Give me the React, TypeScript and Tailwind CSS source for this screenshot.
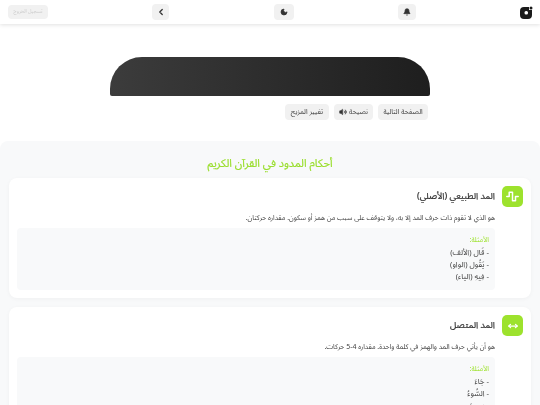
import { Bell, ChevronLeft, Moon, Volume2, MoveHorizontal } from "lucide-react";

const rules = [
  {
    title: "المد الطبيعي (الأصلي)",
    text: "هو الذي لا تقوم ذات حرف المد إلا به، ولا يتوقف على سبب من همز أو سكون. مقداره حركتان.",
    examples: ["- قَال (الألف)", "- يَقُول (الواو)", "- فِيهِ (الياء)"],
    wave: true,
  },
  {
    title: "المد المتصل",
    text: "هو أن يأتي حرف المد والهمز في كلمة واحدة. مقداره 4-5 حركات.",
    examples: ["- جَاءَ", "- السُّوءُ", "- سِيءَ"],
    wave: false,
  },
];

function Logo() {
  return (
    <svg width="13" height="13" viewBox="0 0 13 13">
      <path d="M4 1h5v3h3v5a4 4 0 0 1-4 4H4a4 4 0 0 1-4-4V5a4 4 0 0 1 4-4z" fill="#1a1a1a" />
      <rect x="4.5" y="5" width="3.5" height="3.5" rx="1.5" fill="#fff" />
      <circle cx="11" cy="2" r="1.5" fill="#1a1a1a" />
    </svg>
  );
}

function Wave() {
  return (
    <svg width="13" height="11" viewBox="0 0 13 11" fill="none" stroke="#fff" strokeWidth="1.5" strokeLinecap="round" strokeLinejoin="round">
      <path d="M0.8 5.5H3.2V1.2H6.5V9.8H9.5V5.5H12.2" />
    </svg>
  );
}

export default function App() {
  return (
    <div dir="rtl" className="h-[405px] overflow-hidden will-change-transform font-['Noto_Sans_Arabic','Noto_Sans','DejaVu_Sans',sans-serif] text-[#333]">
      <header className="h-6 flex items-center justify-between pr-[7px] pl-2 bg-white shadow-[0_1px_4px_rgba(0,0,0,0.12)] relative">
        <Logo />
        <div className="w-[18px] h-4 rounded bg-[#f1f1f1] flex items-center justify-center">
          <Bell size={8} fill="#333" strokeWidth={2} />
        </div>
        <div className="w-5 h-4 rounded bg-[#f1f1f1] flex items-center justify-center">
          <Moon size={8} fill="#333" strokeWidth={2} />
        </div>
        <div className="w-[17px] h-4 rounded bg-[#f1f1f1] flex items-center justify-center">
          <ChevronLeft size={10} strokeWidth={3} />
        </div>
        <div className="w-10 h-[14px] rounded bg-[#f1f1f1] flex items-center justify-center text-[5px] text-[#ccc]">
          تسجيل الخروج
        </div>
      </header>

      <div className="flex flex-col items-center pt-[33px]">
        <div className="w-[320px] h-[39px] rounded-t-[32px] rounded-b-[2px] bg-gradient-to-l from-[#1e1e1e] to-[#3c3c3c]" />
        <div className="w-[320px] flex gap-[5px] mt-2 pr-[2px]">
          <button className="h-4 w-[50px] rounded bg-[#f1f1f1] text-[7px] text-[#444]">الصفحة التالية</button>
          <button className="h-4 w-[39px] rounded bg-[#f1f1f1] text-[7px] text-[#444] flex items-center justify-center gap-[2px]">
            نصيحة
            <Volume2 size={8} fill="#333" />
          </button>
          <button className="h-4 w-[44px] rounded bg-[#f1f1f1] text-[7px] text-[#444]">تغيير المزيج</button>
        </div>
      </div>

      <section className="mt-[21px] bg-[#f8f9fa] rounded-t-lg px-[9px] pt-[14px] pb-4">
        <h2 className="text-[11px] leading-[18px] text-center text-[#9ade2e] [-webkit-text-stroke:0.2px_#9ade2e]">أحكام المدود في القرآن الكريم</h2>
        <div className="mt-[5px] flex flex-col gap-[9px]">
          {rules.map((rule) => (
            <div key={rule.title} className="bg-white rounded-lg px-2 pt-2 pb-2 shadow-[0_1px_4px_rgba(0,0,0,0.04)]">
              <div className="flex items-center gap-[7px]">
                <div className="w-[21px] h-[21px] rounded-[5px] bg-[#9de22d] flex items-center justify-center">
                  {rule.wave ? <Wave /> : <MoveHorizontal size={10} color="#fff" strokeWidth={3} />}
                </div>
                <h3 className="text-[9px] text-[#333] [-webkit-text-stroke:0.2px_#333]">{rule.title}</h3>
              </div>
              <p className="mt-[5px] mr-7 text-[6.9px] leading-[12px] text-[#444]">{rule.text}</p>
              <div className="mt-1 mr-7 bg-[#f8f9fa] rounded px-[6px] py-[7px] h-[62px]">
                <div className="text-[7px] leading-[10px] text-[#9de22d]">الأمثلة:</div>
                <ul className="text-[7.7px] leading-[12px] text-[#444] mt-[2px]">
                  {rule.examples.map((ex) => (
                    <li key={ex}>{ex}</li>
                  ))}
                </ul>
              </div>
            </div>
          ))}
        </div>
      </section>
    </div>
  );
}
